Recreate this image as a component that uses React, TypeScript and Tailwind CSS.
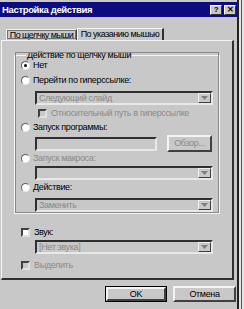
import React from 'react';

const font = { fontFamily: '"Liberation Sans", Arial, sans-serif' };

const Radio: React.FC<{ checked?: boolean }> = ({ checked }) => (
  <span className="w-[9px] h-[9px] rounded-full bg-white border border-t-[#606060] border-l-[#606060] border-b-[#e8e8e8] border-r-[#e8e8e8] flex items-center justify-center shrink-0">
    {checked && <span className="w-[3px] h-[3px] rounded-full bg-black" />}
  </span>
);

const Check: React.FC<{ disabled?: boolean }> = ({ disabled }) => (
  <span
    className={`w-[9px] h-[9px] border-2 border-t-[#404040] border-l-[#404040] border-b-[#e0e0e0] border-r-[#e0e0e0] shrink-0 ${
      disabled ? 'bg-[#c8c8c8]' : 'bg-white'
    }`}
  />
);

const Arrow = () => (
  <span className="w-[13px] h-[10px] bg-[#c8c8c8] border border-t-[#f0f0f0] border-l-[#f0f0f0] border-b-[#404040] border-r-[#404040] flex items-center justify-center">
    <svg width="7" height="4" viewBox="0 0 7 4">
      <path d="M0 0h7L3.5 4z" fill="#808080" />
    </svg>
  </span>
);

const Select: React.FC<{ text?: string; className?: string }> = ({ text, className = '' }) => (
  <div
    className={`h-[14px] border-2 border-t-[#303030] border-l-[#303030] border-b-[#e8e8e8] border-r-[#e8e8e8] bg-[#c8c8c8] flex items-center justify-between pl-[2px] ${className}`}
  >
    <span className="text-[9px] leading-none text-[#8a8a8a] whitespace-nowrap">{text}</span>
    <Arrow />
  </div>
);

const Button: React.FC<{ label: string; def?: boolean; disabled?: boolean; className?: string }> = ({
  label,
  def,
  disabled,
  className = '',
}) => (
  <div className={`flex bg-[#c8c8c8] ${def ? 'border border-black' : ''} ${className}`}>
    <div className="w-full h-full flex items-center justify-center border-2 border-t-[#f4f4f4] border-l-[#f4f4f4] border-b-[#404040] border-r-[#404040]">
      <span className={`text-[9px] leading-none ${disabled ? 'text-[#8a8a8a]' : 'text-black'}`}>{label}</span>
    </div>
  </div>
);

const Option: React.FC<{ label: string; checked?: boolean; disabled?: boolean; className?: string }> = ({
  label,
  checked,
  disabled,
  className = '',
}) => (
  <label className={`flex items-center gap-[3px] h-[12px] ${className}`}>
    <Radio checked={checked} />
    <span className={`text-[9px] leading-none whitespace-nowrap ${disabled ? 'text-[#8a8a8a]' : 'text-black'}`}>
      {label}
    </span>
  </label>
);

export default function App() {
  return (
    <div className="w-[244px] h-[309px] bg-[#e4e4e4] flex overflow-hidden tracking-[-0.35px]" style={font}>
      <div className="w-[239px] h-[309px] shrink-0 bg-[#c8c8c8] border-r-2 border-[#202020] pt-[2px] flex flex-col">
        {/* title bar */}
        <div className="h-[15px] bg-[#0c0c80] flex items-center justify-between pl-[2px] pr-[1px]">
          <span className="text-white font-bold text-[9.5px] leading-none">Настройка действия</span>
          <div className="flex gap-[2px]">
            <span className="w-[12px] h-[10px] bg-[#c8c8c8] border border-b-[#303030] border-r-[#303030] border-t-white border-l-white text-[8px] font-bold leading-[8px] text-center text-black">
              ?
            </span>
            <span className="w-[12px] h-[10px] bg-[#c8c8c8] border border-b-[#303030] border-r-[#303030] border-t-white border-l-white text-[8px] font-bold leading-[8px] text-center text-black">
              ✕
            </span>
          </div>
        </div>

        {/* tabs */}
        <div className="flex items-end pl-[6px] mt-[10px] h-[13px]">
          <div className="w-[71px] h-[11px] overflow-hidden border border-b-0 border-t-[#f4f4f4] border-l-[#f4f4f4] border-r-[#404040] bg-[#c8c8c8] flex items-center justify-center outline outline-1 outline-[#707070] -outline-offset-2">
            <span className="text-[9px] leading-none whitespace-nowrap tracking-[-0.6px]">По щелчку мыши</span>
          </div>
          <div className="w-[87px] h-[12px] overflow-hidden border border-b-0 border-t-[#f4f4f4] border-l-[#f4f4f4] border-r-2 border-r-[#303030] bg-[#c8c8c8] flex items-center justify-center">
            <span className="text-[9px] leading-none whitespace-nowrap tracking-[-0.5px]">По указанию мышью</span>
          </div>
        </div>

        {/* panel */}
        <div className="ml-[1px] w-[233px] h-[240px] border border-t-[#f4f4f4] border-l-[#f4f4f4] border-r-2 border-r-[#303030] border-b-2 border-b-[#303030] pt-[10px] pl-[12px] pr-[12px]">
          <fieldset className="border border-[#f4f4f4] outline outline-1 outline-[#888] -outline-offset-2 px-[6px] pt-0 pb-[1px]">
            <legend className="ml-[5px] px-[1px] text-[9px] leading-none">Действие по щелчку мыши</legend>
            <div className="flex flex-col">
              <Option label="Нет" checked className="-mt-[1px]" />
              <Option label="Перейти по гиперссылке:" className="mt-[3px]" />
              <Select text="Следующий слайд" className="ml-[14px] mt-[5px]" />
              <label className="flex items-center gap-[4px] h-[12px] ml-[17px] mt-[2px]">
                <Check disabled />
                <span className="text-[9px] leading-none whitespace-nowrap text-[#8a8a8a]">
                  Относительный путь в гиперссылке
                </span>
              </label>
              <Option label="Запуск программы:" className="mt-[2px]" />
              <div className="flex items-center ml-[14px] mt-[2px] gap-[10px] h-[17px]">
                <div className="h-[14px] w-[122px] border-2 border-t-[#303030] border-l-[#303030] border-b-[#e8e8e8] border-r-[#e8e8e8] bg-[#c8c8c8]" />
                <Button label="Обзор..." disabled className="w-[45px] h-[17px]" />
              </div>
              <Option label="Запуск макроса:" disabled />
              <Select className="ml-[14px] mt-[2px]" />
              <Option label="Действие:" className="mt-[1px]" />
              <Select text="Заменить" className="ml-[14px] mt-[5px]" />
            </div>
          </fieldset>

          <div className="flex flex-col pl-[7px] mt-[12px]">
            <label className="flex items-center gap-[4px] h-[12px]">
              <Check />
              <span className="text-[9px] leading-none">Звук:</span>
            </label>
            <Select text="[Нет звука]" className="ml-[14px] mt-[2px] mr-[7px]" />
            <label className="flex items-center gap-[4px] h-[12px] mt-[5px]">
              <Check disabled />
              <span className="text-[9px] leading-none text-[#8a8a8a]">Выделить</span>
            </label>
          </div>
        </div>

        {/* buttons */}
        <div className="flex justify-end gap-[6px] mt-[6px] pr-[1px]">
          <Button label="OK" def className="w-[62px] h-[16px]" />
          <Button label="Отмена" className="w-[63px] h-[16px]" />
        </div>
      </div>
      <div className="ml-[2px] w-[1px] h-full bg-[#555]" />
    </div>
  );
}
